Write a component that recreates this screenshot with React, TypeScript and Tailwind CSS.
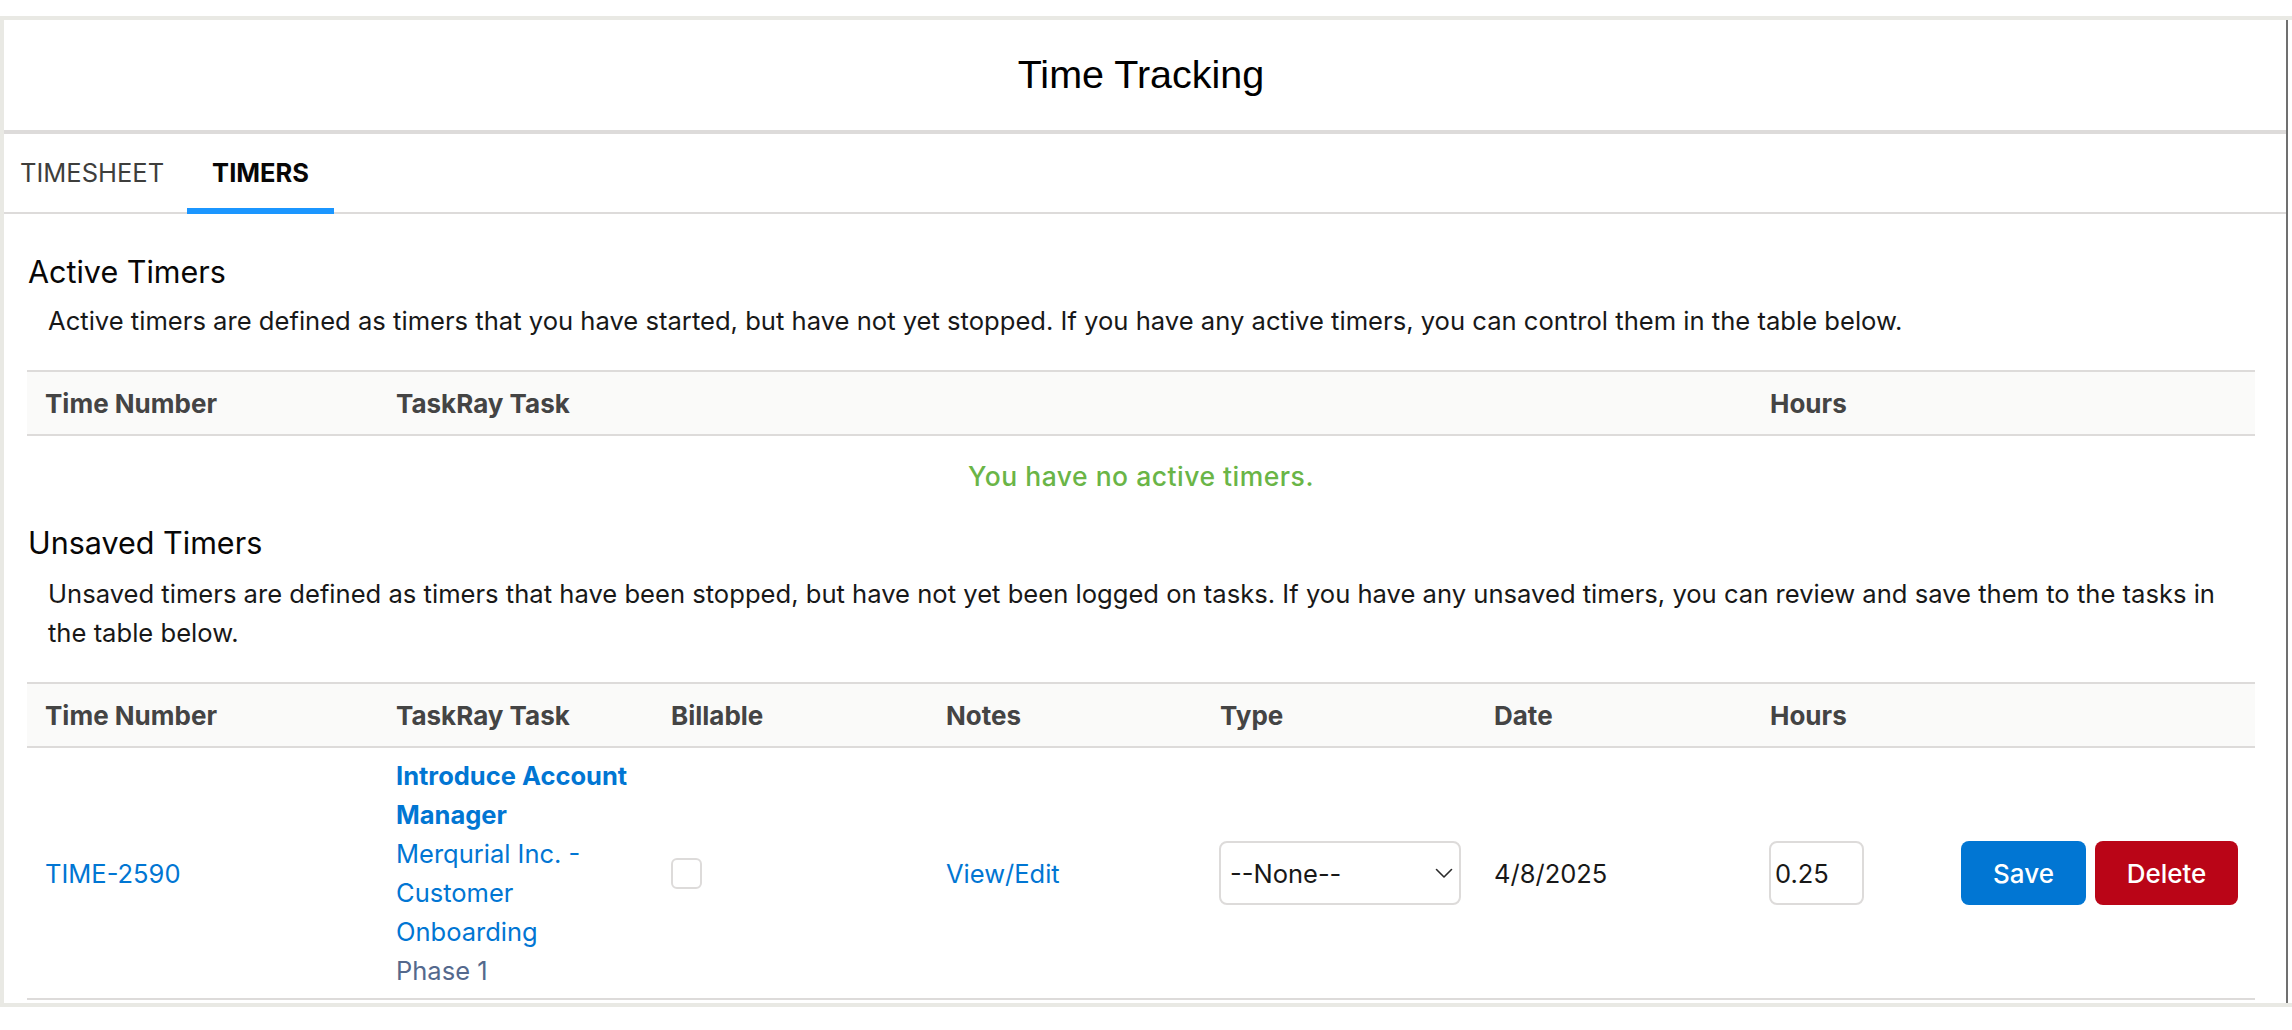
import React from "react";

const COLS = "grid grid-cols-[351px_275px_275px_274px_274px_276px_191px_1fr]";

function Chevron() {
  return (
    <svg width="18" height="11" viewBox="0 0 18 11" fill="none">
      <polyline points="1.5,1.5 9,9 16.5,1.5" stroke="#2b2b2b" strokeWidth="1.6" strokeLinecap="round" strokeLinejoin="round" />
    </svg>
  );
}

export default function App() {
  return (
    <div className="w-[2292px] h-[1030px] bg-white font-['Inter','Noto_Sans',sans-serif] text-[#181818] pt-[16px] overflow-hidden">
      <div className="flex border-t-4 border-b-4 border-l-4 border-[#e9e9e4]">
        <div className="flex-1 min-w-0">
          <header className="h-[114px] flex items-center justify-center border-b-4 border-[#dddbda]">
            <h1 className="font-['Liberation_Sans',Arial,sans-serif] text-[39.5px] leading-none text-black pr-[8px]">
              Time Tracking
            </h1>
          </header>
          <nav className="h-[80px] flex border-b-2 border-[#dddbda]">
            <div className="flex items-center pl-[16px] pr-[23px] text-[25.5px] text-[#3e3e3c]">TIMESHEET</div>
            <div className="relative flex items-center px-[25px] text-[25.5px] font-bold text-[#080707]">
              TIMERS
              <span className="absolute left-0 right-0 -bottom-[2px] h-[6px] bg-[#1b96ff]" />
            </div>
          </nav>
          <main className="pl-[23px] pr-[31px] pb-[3px]">
            <h2 className="mt-[40px] pl-[1px] text-[30.5px] leading-[36px] text-[#080707]">Active Timers</h2>
            <p className="mt-[11px] pl-[21px] text-[25.6px] leading-[39px]">
              Active timers are defined as timers that you have started, but have not yet stopped. If you have any active timers, you can control them in the table below.
            </p>
            <div className="mt-[30px] border-t-2 border-[#dddbda]">
              <div className={`${COLS} h-[64px] items-center bg-[#fafaf9] border-b-2 border-[#dddbda] text-[26px] font-bold text-[#444444]`}>
                <div className="pl-[18px]">Time Number</div>
                <div className="pl-[18px] col-span-5">TaskRay Task</div>
                <div className="pl-[18px]">Hours</div>
                <div />
              </div>
              <div className="pt-[21px] text-center text-[26.5px] leading-[39px] font-medium tracking-[0.5px] text-[#6ab547]">
                You have no active timers.
              </div>
            </div>

            <h2 className="mt-[29px] pl-[1px] text-[30.5px] leading-[36px] text-[#080707]">Unsaved Timers</h2>
            <p className="mt-[13px] pl-[21px] pr-[20px] text-[25.6px] leading-[39px]">
              Unsaved timers are defined as timers that have been stopped, but have not yet been logged on tasks. If you have any unsaved timers, you can review and save them to the tasks in the table below.
            </p>
            <div className="mt-[30px] border-t-2 border-[#dddbda]">
              <div className={`${COLS} h-[64px] items-center bg-[#fafaf9] border-b-2 border-[#dddbda] text-[26px] font-bold text-[#444444]`}>
                <div className="pl-[18px]">Time Number</div>
                <div className="pl-[18px]">TaskRay Task</div>
                <div className="pl-[18px]">Billable</div>
                <div className="pl-[18px]">Notes</div>
                <div className="pl-[18px]">Type</div>
                <div className="pl-[18px]">Date</div>
                <div className="pl-[18px]">Hours</div>
                <div />
              </div>
              <div className={`${COLS} items-center border-b-2 border-[#dddbda] text-[25.5px] leading-[39px]`}>
                <div className="pl-[18px] text-[#0176d3]">TIME-2590</div>
                <div className="pl-[18px] py-[8px]">
                  <div className="w-[255px]">
                    <div className="font-bold text-[#0176d3]">Introduce Account Manager</div>
                    <div className="text-[#0176d3]">Merqurial Inc. - Customer Onboarding</div>
                    <div className="text-[#54698d]">Phase 1</div>
                  </div>
                </div>
                <div className="pl-[18px]">
                  <div className="w-[31px] h-[31px] border-2 border-[#dddbda] rounded-[6px] bg-white" />
                </div>
                <div className="pl-[18px] text-[#0176d3]">View/Edit</div>
                <div className="pl-[17px]">
                  <div className="w-[242px] h-[64px] rounded-[8px] border-2 border-[#dddbda] bg-white flex items-center justify-between pl-[9px] pr-[6px]">
                    <span>--None--</span>
                    <Chevron />
                  </div>
                </div>
                <div className="pl-[18px]">4/8/2025</div>
                <div className="pl-[17px]">
                  <div className="w-[95px] h-[64px] rounded-[8px] border-2 border-[#dddbda] bg-white flex items-center pl-[4px]">0.25</div>
                </div>
                <div className="pl-[18px] flex gap-[9px]">
                  <button className="w-[125px] h-[64px] rounded-[8px] bg-[#0176d3] text-white text-[26px] font-medium">Save</button>
                  <button className="w-[143px] h-[64px] rounded-[8px] bg-[#ba0517] text-white text-[26px] font-medium">Delete</button>
                </div>
              </div>
            </div>
          </main>
        </div>
        <div className="w-[6px] border-l-2 border-[#707070] bg-white" />
      </div>
    </div>
  );
}
